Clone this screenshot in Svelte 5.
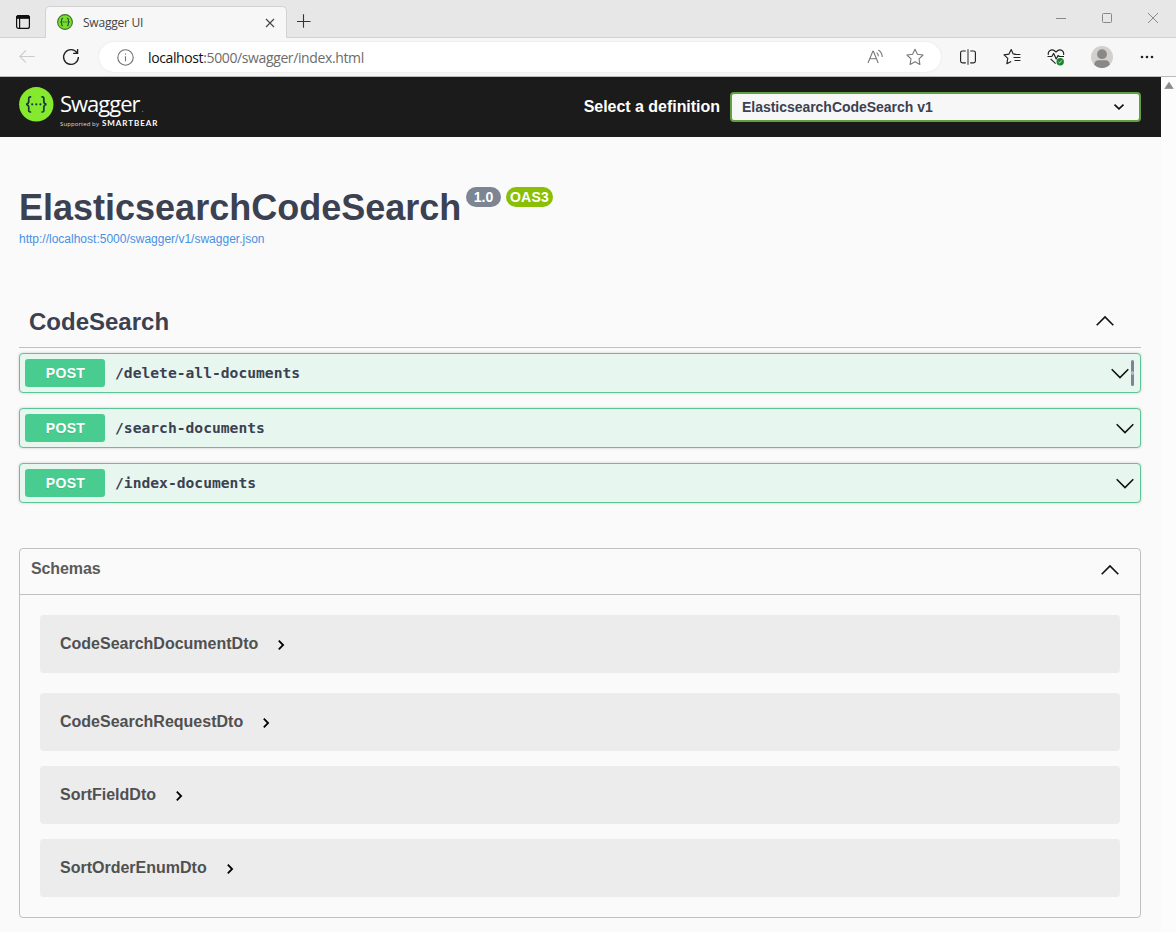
<script>
  const operations = [
    { path: '/delete-all-documents', copy: true },
    { path: '/search-documents', copy: false },
    { path: '/index-documents', copy: false }
  ];
  const models = ['CodeSearchDocumentDto', 'CodeSearchRequestDto', 'SortFieldDto', 'SortOrderEnumDto'];
</script>

<div class="window">
  <div class="titlebar">
    <svg class="tabs-icon" width="16" height="16" viewBox="0 0 16 16" fill="none" stroke="#111">
      <rect x="1.6" y="1.6" width="12.8" height="12.8" rx="2" stroke-width="1.2" />
      <path d="M1.5 4.3V3.2Q1.5 1.5 3.2 1.5H12.8Q14.5 1.5 14.5 3.2V4.3Z" fill="#111" />
      <path d="M4.6 4V14.5" stroke-width="1.2" />
    </svg>
    <div class="tab">
      <svg width="16" height="16" viewBox="0 0 16 16">
        <circle cx="8" cy="8" r="7.4" fill="#7ade2b" stroke="#38772b" stroke-width="1.1" />
        <g fill="none" stroke="#214d3b" stroke-width="1.1">
          <path d="M6.1 4.2C4.6 4.1 4.7 5.1 4.7 6.2C4.7 7.3 4.4 8 3.3 8C4.4 8 4.7 8.7 4.7 9.8C4.7 10.9 4.6 11.9 6.1 11.8M9.9 4.2C11.4 4.1 11.3 5.1 11.3 6.2C11.3 7.3 11.6 8 12.7 8C11.6 8 11.3 8.7 11.3 9.8C11.3 10.9 11.4 11.9 9.9 11.8" />
          <path d="M5.6 8H10.6" stroke-dasharray="1.2 .7" />
        </g>
      </svg>
      <span class="tab-title">Swagger UI</span>
      <svg class="tab-close" width="10" height="10" viewBox="0 0 10 10" stroke="#444" stroke-width="1.1"><path d="M1 1L9 9M9 1L1 9" /></svg>
    </div>
    <svg class="plus" width="14" height="14" viewBox="0 0 14 14" stroke="#333" stroke-width="1.1"><path d="M6.5 .3V13.7M0 7.5H13.5" /></svg>
    <div class="controls">
      <svg width="12" height="12" viewBox="0 0 12 12" stroke="#888"><path d="M1 6.5H11" /></svg>
      <svg width="12" height="12" viewBox="0 0 12 12" fill="none" stroke="#888"><rect x="1.5" y="1.5" width="9" height="9" rx="1" /></svg>
      <svg width="12" height="12" viewBox="0 0 12 12" stroke="#888"><path d="M1 1L11 11M11 1L1 11" /></svg>
    </div>
  </div>

  <div class="toolbar">
    <svg class="back" width="16" height="14" viewBox="0 0 16 14" fill="none" stroke="#ccc" stroke-width="1.1"><path d="M15.8 6.5H1M7 .3L.8 6.5L7 12.7" /></svg>
    <svg class="reload" width="18" height="18" viewBox="0 0 18 18" fill="none" stroke="#222" stroke-width="1.35"><path d="M15.1 4.8A7.4 7.4 0 1 0 16.4 9M15.6 1V5.4H11.1" /></svg>
    <div class="address">
      <svg width="17" height="17" viewBox="0 0 17 17" fill="none" stroke="#707070" stroke-width="1.1"><circle cx="8.5" cy="8.5" r="7.7" /><path d="M8.5 7.3V12.3" /><circle cx="8.5" cy="5" r=".45" fill="#707070" stroke-width=".5" /></svg>
      <span class="url"><b>localhost</b>:5000/swagger/index.html</span>
      <svg class="read" width="17" height="16" viewBox="0 0 17 16" fill="none" stroke="#777" stroke-width="1.1"><path d="M1 14L5.8 2.3H6.4L11.2 14M2.8 9.8H9.4M9.6 3.6Q11.4 5 11.4 7.3M11.4 1Q15.2 3.6 15.2 7.9" /></svg>
      <svg class="star" width="18" height="18" viewBox="0 0 18 18" fill="none" stroke="#777" stroke-width="1.1" stroke-linejoin="round"><path d="M9 1.2L11.4 6.2L17 7L13 10.9L13.9 16.4L9 13.8L4.1 16.4L5 10.9L1 7L6.6 6.2Z" /></svg>
    </div>
    <div class="tools">
      <svg width="18" height="16" viewBox="0 0 18 16" fill="none" stroke="#222" stroke-width="1.15"><path d="M6.8 2H3.4Q1.6 2 1.6 3.8V12.1Q1.6 13.9 3.4 13.9H6.8M11.2 2H14.6Q16.4 2 16.4 3.8V12.1Q16.4 13.9 14.6 13.9H11.2" /><path d="M9 .2V15.8" stroke="#444" /></svg>
      <svg width="18" height="18" viewBox="0 0 18 18" fill="none" stroke="#222" stroke-width="1.15" stroke-linejoin="round"><path d="M13 6.2L10.2 5.9L8.2 1.6L6 6.1L1 6.9L4.8 10.4L3.8 15.8L8.2 13.4M11 6.5H17.4M10.5 9.5H17.4M11.5 12.5H17.4" /></svg>
      <svg width="18" height="18" viewBox="0 0 18 18" fill="none" stroke="#222" stroke-width="1.15" stroke-linejoin="round"><path d="M1.4 6.8Q.7 4.3 2.7 2.7Q5.8.7 9 4Q12.2.7 15.3 2.7Q17.2 4.3 16.5 6.8M3.6 10.8L8.6 15.6" /><path d="M.5 8.5H4.8L6.7 5.4L9.2 11L11.2 7.4L12.2 8.5H17" /><circle cx="13.2" cy="13.7" r="3.7" fill="#16852c" stroke="none" /><path d="M11.6 14.1L12.6 14.9L15 12.4" stroke="#fff" stroke-width=".8" /></svg>
      <svg class="avatar" width="22" height="22" viewBox="0 0 22 22"><circle cx="11" cy="11" r="11" fill="#d2d0ce" /><circle cx="11" cy="8.2" r="4.9" fill="#8a8886" /><path d="M3.2 18.8Q3.5 14.2 7.5 14.2H14.5Q18.5 14.2 18.8 18.8A11 11 0 0 1 3.2 18.8Z" fill="#8a8886" /></svg>
      <svg width="14" height="4" viewBox="0 0 14 4" fill="#222"><circle cx="2" cy="2" r="1.3" /><circle cx="7" cy="2" r="1.3" /><circle cx="12" cy="2" r="1.3" /></svg>
    </div>
  </div>

  <div class="viewport">
    <div class="page">
      <header class="topbar">
        <div class="logo">
          <svg width="35" height="35" viewBox="0 0 35 35">
            <circle cx="17.3" cy="17.3" r="17.2" fill="#85ea2d" />
            <g fill="none" stroke="#173647" stroke-width="1.7">
              <path d="M12.2 9.8C9 9.6 9.8 11.3 9.8 13.8C9.8 16 9.4 17.3 7 17.3C9.4 17.3 9.8 18.8 9.8 21C9.8 23.5 9 25.2 12.2 25M22.4 9.8C25.6 9.6 24.8 11.3 24.8 13.8C24.8 16 25.2 17.3 27.6 17.3C25.2 17.3 24.8 18.8 24.8 21C24.8 23.5 25.6 25.2 22.4 25" />
            </g>
            <g fill="#173647"><circle cx="13.2" cy="17.3" r="1.1" /><circle cx="17.3" cy="17.3" r="1.1" /><circle cx="21.4" cy="17.3" r="1.1" /></g>
          </svg>
          <div class="wordmark">
            <div class="brand">Swagger<span class="dot">.</span></div>
            <div class="support"><span>Supported by</span><b>SMARTBEAR</b></div>
          </div>
        </div>
        <div class="definition">
          <span>Select a definition</span>
          <div class="select">
            <span>ElasticsearchCodeSearch v1</span>
            <svg width="12" height="8" viewBox="0 0 12 8" fill="none" stroke="#111" stroke-width="1.7"><path d="M1.5 1.7L6 5.9L10.5 1.7" /></svg>
          </div>
        </div>
      </header>

      <main>
        <section class="info">
          <div class="heading">
            <h1>ElasticsearchCodeSearch</h1>
            <span class="badge version">1.0</span>
            <span class="badge oas">OAS3</span>
          </div>
          <a href="#spec">http://localhost:5000/swagger/v1/swagger.json</a>
        </section>

        <section>
          <div class="tag">
            <h2>CodeSearch</h2>
            <svg width="20" height="12" viewBox="0 0 20 12" fill="none" stroke="#111" stroke-width="1.6"><path d="M1.7 10.2L10 1.9L18.3 10.2" /></svg>
          </div>
          <div class="operations">
            {#each operations as op}
              <div class="operation">
                <span class="method">POST</span>
                <span class="path">{op.path}</span>
                <svg width="20" height="12" viewBox="0 0 20 12" fill="none" stroke="#111" stroke-width="1.6"><path d="M1.7 2.3L10 10.6L18.3 2.3" /></svg>
                {#if op.copy}<i class="copy"></i>{/if}
              </div>
            {/each}
          </div>
        </section>

        <section class="schemas">
          <div class="schemas-head">
            <h3>Schemas</h3>
            <svg width="20" height="12" viewBox="0 0 20 12" fill="none" stroke="#111" stroke-width="1.6"><path d="M1.7 10.2L10 1.9L18.3 10.2" /></svg>
          </div>
          <div class="models">
            {#each models as model}
              <div class="model">
                <span>{model}</span>
                <svg width="8" height="12" viewBox="0 0 8 12" fill="none" stroke="#000" stroke-width="1.8"><path d="M1.8 1.6L6.1 6L1.8 10.4" /></svg>
              </div>
            {/each}
          </div>
        </section>
      </main>
    </div>
    <div class="scrollbar"><svg width="10" height="7" viewBox="0 0 10 7"><path d="M5 0L9.4 6.7H.6Z" fill="#8a8a8a" stroke="#8a8a8a" stroke-width=".4" /></svg></div>
  </div>
</div>

<style>
  :global(body) { background: #fafafa; }
  .window { width: 1176px; height: 932px; overflow: hidden; display: flex; flex-direction: column; font-family: "Liberation Sans", Arial, sans-serif; color: #3b4151; }
  .window * { box-sizing: border-box; }
  svg { display: block; flex: none; }
  h1, h2, h3 { margin: 0; }

  .titlebar { height: 38px; flex: none; display: flex; background: #e7e7e7; border-bottom: 1px solid #d2d2d2; }
  .tabs-icon { margin: 14px 0 0 15px; }
  .tab { margin: 6px 0 -1px 14px; width: 242px; height: 32px; display: flex; align-items: center; padding: 0 11px 1px; background: #f7f7f7; border: 1px solid #d2d2d2; border-bottom: 0; border-radius: 5px 5px 0 0; font-family: "Open Sans", sans-serif; font-size: 12px; color: #444; }
  .tab-title { margin-left: 10px; letter-spacing: -.22px; white-space: nowrap; }
  .tab-close { margin: 1px 0 0 auto; }
  .plus { margin: 14px 0 0 10px; }
  .controls { margin-left: auto; display: flex; gap: 34px; padding: 12px 17px 0 0; }

  .toolbar { height: 39px; flex: none; display: flex; align-items: center; padding-left: 19px; background: #f7f7f7; border-bottom: 1px solid #bbb; }
  .reload { margin-left: 27px; }
  .address { margin-left: 19px; width: 842px; height: 30px; display: flex; align-items: center; padding: 0 17px 0 18px; background: #fff; border-radius: 15px; box-shadow: 0 0 2px #ddd; }
  .url { margin-left: 14px; padding-top: 1px; font: 14px/20px "Open Sans", sans-serif; letter-spacing: -.38px; color: #6c6c6c; }
  .url b { font-weight: 400; color: #111; }
  .read { margin-left: auto; }
  .star { margin-left: 22px; }
  .tools { display: flex; align-items: center; margin-left: 18px; gap: 26px; }
  .tools :last-child { margin-left: 1px; }
  .tools .avatar { margin-left: 0; }

  .viewport { flex: 1; min-height: 0; display: flex; }
  .page { width: 1161px; background: #fafafa; }
  .scrollbar { width: 15px; background: #fcfcfc; padding: 5px 0 0 3px; }

  .topbar { height: 60px; background: #1b1b1b; display: flex; justify-content: space-between; padding: 0 20px 0 19px; }
  .logo { display: flex; padding-top: 10px; }
  .wordmark { margin-left: 6px; color: #fff; font-family: "Open Sans", sans-serif; }
  .brand { height: 32px; font-size: 22px; line-height: 33px; letter-spacing: -1px; }
  .dot { margin-left: 2px; font-size: 8px; color: #aaa; }
  .support { display: flex; align-items: baseline; gap: 3px; font-size: 6px; line-height: 8px; letter-spacing: .1px; white-space: nowrap; color: #ddd; }
  .support b { font-family: Lato, sans-serif; font-weight: 700; font-size: 8px; letter-spacing: .93px; color: #fff; }
  .definition { display: flex; align-items: center; gap: 10px; color: #fff; font-weight: 700; font-size: 16px; letter-spacing: -.03px; }
  .select { width: 411px; height: 30px; display: flex; align-items: center; justify-content: space-between; padding: 0 14px 0 10px; background: #f7f7f7; border: 2px solid #62a03f; border-radius: 4px; color: #3b4151; font-size: 14px; }

  main { padding: 49px 20px 0 19px; }
  .info { height: 110px; }
  .heading { display: flex; align-items: flex-start; }
  h1 { width: 441px; font-size: 36px; line-height: 44px; white-space: nowrap; }
  .badge { height: 20px; margin-top: 1px; border-radius: 10px; color: #fff; font-size: 14px; font-weight: 700; line-height: 20px; text-align: center; }
  .version { width: 35px; margin-left: 6px; background: #7d8492; }
  .oas { width: 47px; margin-left: 5px; background: #89bf04; letter-spacing: .2px; }
  .info a { display: block; margin-top: 2px; font-size: 12px; line-height: 14px; color: #4990e2; text-decoration: none; }

  .tag { height: 52px; display: flex; align-items: center; justify-content: space-between; padding: 0 26px 0 10px; border-bottom: 1px solid #bfc0c3; }
  .tag svg { margin-top: -2px; }
  h2 { font-size: 24px; line-height: 28px; }
  .operations { display: flex; flex-direction: column; gap: 15px; padding-top: 5px; }
  .operation { height: 40px; display: flex; align-items: center; padding: 0 5px; background: #e8f6f0; border: 1px solid #5bc596; border-radius: 4px; box-shadow: 0 0 3px rgba(0, 0, 0, .19); }
  .method { width: 80px; height: 28px; padding-left: 1px; border-radius: 3px; background: #49cc90; color: #fff; font-size: 14px; font-weight: 700; line-height: 28px; letter-spacing: .3px; text-align: center; text-shadow: 0 1px 0 rgba(0, 0, 0, .1); }
  .path { margin-left: 10px; font: 700 14.65px/20px "DejaVu Sans Mono", monospace; }
  .operation svg { margin-left: auto; }
  .copy { width: 3px; height: 26px; margin: 0 1px; border-radius: 2px; background: radial-gradient(circle at center, #b4bac5 1.5px, #7d8492 2px); }

  .schemas { margin-top: 45px; height: 370px; border: 1px solid #bfc0c3; border-radius: 4px; }
  .schemas-head { height: 46px; display: flex; justify-content: space-between; padding: 10px 20px 0 11px; border-bottom: 1px solid #bfc0c3; color: #5a5a5a; }
  .schemas-head svg { margin-top: 5px; }
  h3 { font-size: 16px; line-height: 19px; letter-spacing: -.1px; }
  .models { padding: 20px 20px 0; display: flex; flex-direction: column; gap: 15px; }
  .model { height: 58px; display: flex; align-items: center; padding-left: 20px; background: #ececec; border-radius: 4px; color: #505050; font-size: 16px; font-weight: 700; }
  .model:first-child { margin-bottom: 5px; }
  .model svg { margin: 2px 0 0 19px; }
</style>
